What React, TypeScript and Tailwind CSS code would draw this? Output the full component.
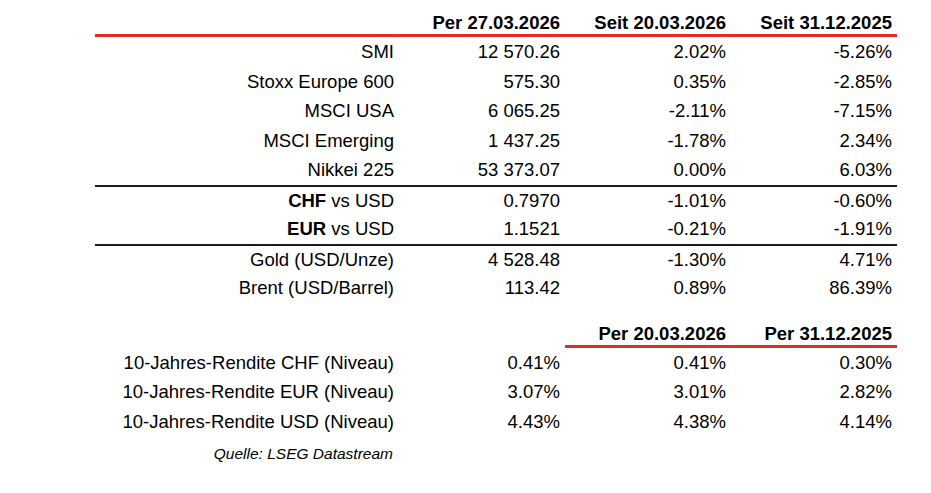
import React from 'react';

type Row = { label: React.ReactNode; v: [string, string, string]; top?: boolean };

const rows: Row[] = [
  { label: 'SMI', v: ['12 570.26', '2.02%', '-5.26%'] },
  { label: 'Stoxx Europe 600', v: ['575.30', '0.35%', '-2.85%'] },
  { label: 'MSCI USA', v: ['6 065.25', '-2.11%', '-7.15%'] },
  { label: 'MSCI Emerging', v: ['1 437.25', '-1.78%', '2.34%'] },
  { label: 'Nikkei 225', v: ['53 373.07', '0.00%', '6.03%'] },
  {
    label: (
      <>
        <b>CHF</b> vs USD
      </>
    ),
    v: ['0.7970', '-1.01%', '-0.60%'],
    top: true,
  },
  {
    label: (
      <>
        <b>EUR</b> vs USD
      </>
    ),
    v: ['1.1521', '-0.21%', '-1.91%'],
  },
  { label: 'Gold (USD/Unze)', v: ['4 528.48', '-1.30%', '4.71%'], top: true },
  { label: 'Brent (USD/Barrel)', v: ['113.42', '0.89%', '86.39%'] },
];

const bonds: Row[] = [
  { label: '10-Jahres-Rendite CHF (Niveau)', v: ['0.41%', '0.41%', '0.30%'] },
  { label: '10-Jahres-Rendite EUR (Niveau)', v: ['3.07%', '3.01%', '2.82%'] },
  { label: '10-Jahres-Rendite USD (Niveau)', v: ['4.43%', '4.38%', '4.14%'] },
];

const grid = 'grid grid-cols-[304px_166px_166px_166px]';

function DataRow({ row }: { row: Row }) {
  return (
    <div
      className={`${grid} ${row.top ? 'border-t-2 border-[#1c1c1c] leading-[27.5px]' : 'leading-[29.5px]'}`}
    >
      <div className="text-right pr-[5px]">{row.label}</div>
      {row.v.map((x, i) => (
        <div key={i} className="text-right pr-[5px]">
          {x}
        </div>
      ))}
    </div>
  );
}

export default function App() {
  return (
    <div className="w-[931px] h-[493px] bg-white text-black font-['Liberation_Sans',Arial,sans-serif] text-[18.5px]">
      <div className="ml-[95px] w-[802px]">
        <div className={`${grid} h-[37px] items-end leading-[22px] font-bold border-b-[3px] border-[#dc2f2b]`}>
          <div />
          <div className="text-right pr-[5px]">Per 27.03.2026</div>
          <div className="text-right pr-[5px]">Seit 20.03.2026</div>
          <div className="text-right pr-[5px]">Seit 31.12.2025</div>
        </div>
        {rows.map((r, i) => (
          <DataRow key={i} row={r} />
        ))}
        <div className={`${grid} mt-[20px] leading-[22px] font-bold`}>
          <div />
          <div />
          <div className="text-right pr-[5px]">Per 20.03.2026</div>
          <div className="text-right pr-[5px]">Per 31.12.2025</div>
        </div>
        <div className={grid}>
          <div />
          <div />
          <div className="col-span-2 h-[3px] bg-[#dc2f2b]" />
        </div>
        {bonds.map((r, i) => (
          <DataRow key={i} row={r} />
        ))}
        <div className="w-[304px] pr-[6px] mt-[8px] text-right italic text-[15.5px] leading-[20px]">
          Quelle: LSEG Datastream
        </div>
      </div>
    </div>
  );
}
